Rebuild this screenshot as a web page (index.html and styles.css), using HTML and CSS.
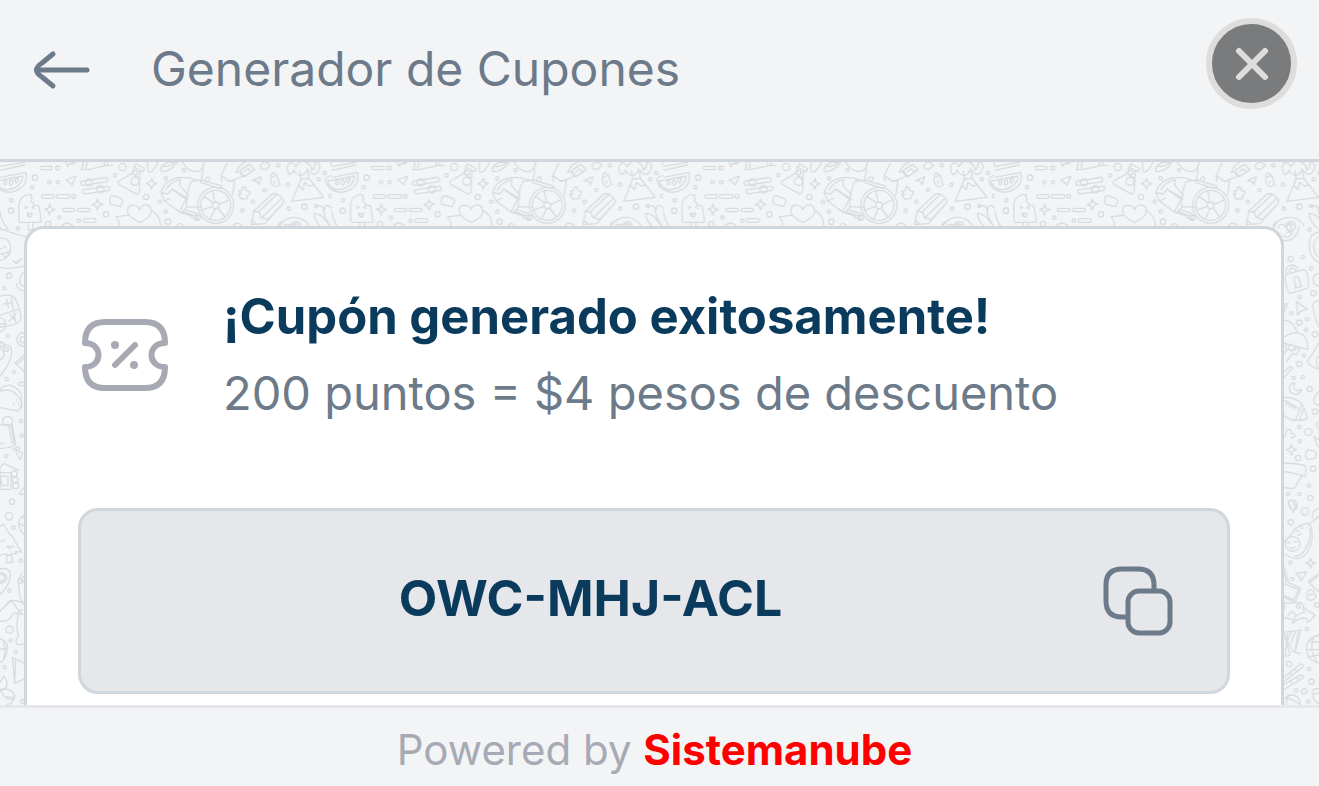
FILE: index.html
```html
<!DOCTYPE html>
<html lang="es">
<head>
<meta charset="utf-8">
<meta name="viewport" content="width=device-width, initial-scale=1">
<title>Generador de Cupones</title>
<link rel="stylesheet" href="styles.css">
</head>
<body>
<header class="topbar">
  <button class="icon-button back" type="button" aria-label="Volver">
    <svg width="60" height="44" viewBox="0 0 60 44" fill="none" stroke="currentColor" stroke-width="5" stroke-linecap="round" stroke-linejoin="round"><path d="M21 6 10 15Q-1 22 10 29L21 38M5 22H55"/></svg>
  </button>
  <h1 class="title">Generador de Cupones</h1>
  <button class="close" type="button" aria-label="Cerrar">
    <svg width="36" height="36" viewBox="0 0 36 36" fill="none" stroke="currentColor" stroke-width="6" stroke-linecap="round"><path d="m5 5 26 26M31 5 5 31"/></svg>
  </button>
</header>
<main class="content">
  <svg class="doodles" aria-hidden="true">
    <defs>
      <pattern id="doodle" width="995" height="1650" patternUnits="userSpaceOnUse" patternTransform="scale(.33333)">
        <g fill="none" stroke="#d9dbde" stroke-width="4" stroke-linecap="round" stroke-linejoin="round">
          <g transform="translate(0 -36)">
            <path d="M0 49 73 37M0 61 73 45M0 82 77 67Q85 102 57 118 28 135 0 119M0 113Q23 125 46 112 70 99 68 78L0 91M12 97q1-9 6-8 4 8-1 15-6 1-5-7ZM30 92q8-6 8 5 0 10-7 8-6-4-1-13ZM46 87q8-5 9 2 0 8-6 10-7-4-3-12Z"/>
            <path d="M57 212 56 168Q58 138 86 133l9 2q-7 8 2 11-8 9 3 12 0 10 11 8l6 3 7 44q-1 4-5 4H62q-5 0-5-5ZM85 220v20h13v-20M75 169l8 3-7 3M103 168l-7 4 7 3M81 190h15q-1 11-8 11-7-2-7-11ZM86 193v6"/>
            <path d="M0 185Q5 218 25 238 16 243 0 237M197 35l6 15 4-8 18-3-15-5M212 100 197 90 228 78 216 105ZM149 162l4 12 12 5-12 4-5 12-4-13-10-4 11-4ZM292 147l4 11 12 5-11 4-5 12-5-11-11-4 12-5ZM455 85l4 12 11 4-11 5-5 12-4-12-11-5 12-5Z"/>
            <path d="M243 59h20l58-13h17M246 59l4-21M258 56l3-18M313 47v-12M323 46v-11"/>
            <rect x="120" y="49" width="37" height="10" rx="5"/><rect x="125" y="134" width="37" height="11" rx="5"/><rect x="169" y="134" width="40" height="11" rx="5"/><rect x="187" y="175" width="38" height="10" rx="5"/><rect x="233" y="175" width="38" height="10" rx="5"/><rect x="250" y="206" width="38" height="11" rx="5"/>
            <g transform="rotate(-9 282 94)"><rect x="242" y="88" width="81" height="13" rx="6"/><circle cx="267" cy="95" r="11"/></g>
            <g transform="rotate(-8 288 120)"><rect x="248" y="114" width="81" height="13" rx="6"/><circle cx="301" cy="120" r="11"/></g>
            <path d="m408 42 22 12q5 2 2 6l-4 5q-4-2-26-14l6-9M404 52l-9 19-38 22q-6 5 0 10l48 27q10 6 13-7l2-62M403 78l13 5"/><circle cx="405" cy="94" r="12"/><circle cx="406" cy="68" r="7"/>
            <path d="m331 140 10-3 20 8q8 2 7 10l-7 15-25-6q-7-1-7-9ZM443 36q-2 30 5 31 13-2 26-31M482 60q0-14 21-23h28q-17 26-43 28-6 0-6-5ZM488 48q16 6 37-11"/>
            <path d="M382 184q2-21 20-18 13 1 16 13 8-16 21-14 15 2 15 19 0 17-35 34-36-18-37-34ZM356 235q4-16 0-22l-8-13 38-4M453 181q28 12 28 48"/>
            <path d="M483 128q9-36 48-44 33-6 62 8M483 128l20 4 14-15 48 30M497 120q16-26 44-31l-2 17 27 30M483 128l10 25 45 33 20-38-40-29M493 153l17-8M538 186l38 12M574 94q-17 37-14 76l44 2M562 170l-14 15 42 14M547 36q16 28 41 29 19 0 25-29M610 57l-6 33-28 4M552 178l38 12 2 18-19-6M604 91q4-3 10 2l49 14q6 5 3 8l-17-2-45-15q-5-4 0-7ZM665 94l-2-17 25 17 16-2-6 43"/>
            <circle cx="647" cy="166" r="54"/><circle cx="647" cy="166" r="45"/><circle cx="647" cy="166" r="10"/><circle cx="592" cy="203" r="8"/><path d="m644 156-6-34M657 163l28-12M654 174l20 27M645 176l-14 30M637 169l-34 12M639 158l-27-18M617 90q0-12 11-8 2 6-3 11M663 77l17-36M688 94l43-16M707 66l14-1 14 15M720 61l28-18 16 16-29 20Q720 81 720 61M732 65l12-9 8 8M781 46l13-12 17 11-14 14-14-3ZM757 92l27-12-7 24-6-10ZM710 67q4-22 28-31"/>
            <path d="m716 124 10-3 2-10 9 1 1 9 12 4-2 9-7 4 2 8-19 1-9-13 8-2ZM812 82l19-6 8 29-14 6q-14-7-13-29ZM814 81q-3-10 5-12 8 0 6 9M824 92v8"/>
            <path d="m754 224 8-41 52-49q10-8 25 3 16 12 10 23l-54 61ZM760 183l19 5 4 15 17 4M775 187l55-53M785 203l58-56M801 211l49-52M755 209l13 13"/>
            <path d="M868 74q-14-23 2-36 15 3 17 12 12-21 30-14 17 6 18 25 13-11 10-26 11 0 14 12 2 19-17 27-14-5-21-17-5 19-21 20-16-6-18-17-4 12-14 14ZM900 63l3 24-27 67 95-12-45-58-2-20M903 87l24-2M903 87l-7 19 13 13 5-22 14 11 15-3"/>
            <path d="M838 229q16-28 46-27 28 1 43 25M949 167q18-2 25 12-2-14 11-12 10 2 11 16l18 54M942 190q14 1 20 7 8 2 10 9l23 27M942 190q4 28 26 45M970 177q4 31 26 58M995 76q-19 5-19 14 5 21 19 28M995 48l-3-12M995 92l-11-1q0 15 11 19M184 229q16-20 36 0M529 230q10-20 22 0M700 226q11-13 26 0M873 226q5-16 22 0"/>
            <g><circle cx="173" cy="54" r="6"/><circle cx="148" cy="97" r="5"/><circle cx="174" cy="97" r="5"/><circle cx="105" cy="83" r="8"/><circle cx="96" cy="112" r="5"/><circle cx="34" cy="151" r="5"/><circle cx="33" cy="182" r="8"/><circle cx="54" cy="235" r="5"/><circle cx="144" cy="222" r="8"/><circle cx="178" cy="203" r="5"/><circle cx="221" cy="139" r="6"/><circle cx="237" cy="212" r="5"/><circle cx="318" cy="193" r="8"/><circle cx="368" cy="51" r="11"/><circle cx="345" cy="76" r="5"/><circle cx="438" cy="141" r="8"/><circle cx="497" cy="85" r="5"/><circle cx="479" cy="155" r="5"/><circle cx="497" cy="185" r="5"/><circle cx="504" cy="215" r="8"/><circle cx="552" cy="60" r="5"/><circle cx="727" cy="182" r="5"/><circle cx="759" cy="155" r="5"/><circle cx="794" cy="120" r="5"/><circle cx="835" cy="46" r="5"/><circle cx="864" cy="104" r="5"/><circle cx="866" cy="176" r="5"/><circle cx="913" cy="170" r="8"/><circle cx="948" cy="168" r="5"/><circle cx="956" cy="88" r="5"/><circle cx="974" cy="69" r="5"/><circle cx="992" cy="138" r="5"/></g>
          </g>
          <g transform="translate(0 174)">
            <path d="M0 24q35 17 77 25M0 55q23-5 31 20 5 31-20 43L0 121M0 86l6-1M11 80l6 3M0 101q15 3 26-7M8 99q1 14 12 11 8-4 3-13M0 142q40 8 75-5M39 122l8 8 12-11M45 126l6 4 14-14M76 156q-23 11-14 38l13 7M49 190q0 18 25 24"/>
            <path d="M0 229q27-8 42 2 13 17 20 53 5 19-15 27-28 11-47 10M35 227q-2 11 12 78M0 286l53-18M10 252l27-4M20 238l5 25M30 283l16 19M48 280l-21 24M0 293q14 2 17 18 1 18-17 25M0 312h16"/>
            <path d="M0 365q13 0 10 11 28-6 24 28Q32 430 0 468M0 384q13 6 12 20-2 12-12 16M77 340q-24-5-27 18 2 22 27 21M76 350q-16-2-17 9 2 11 17 10M45 429l32-28M45 429l30 27M51 432l24-20"/>
            <path d="M0 516q1-19 24-20 18-3 40 25v22q-2 30-11 30L0 563M0 514q36-14 58 20 11 12 6 30M54 492q3-8 21-4v8q-18 3-21-4ZM49 539v4M41 548v4M55 549v4"/>
            <path d="M0 615q17-3 37-1 6 32 10 61-16 9-47 10M25 615l12 55M32 613l12 59M8 602q2-13 16-12 14 2 14 14-3 14-18 13-14-2-12-15ZM0 673q10-11 12 1M41 688q8-9 14-7l4 2-3 12 12 3-8 21-5-8-7-14 4-9-13 2ZM0 742l12-12 43 21M0 742v67M0 758h33v50H0M1 769h23v28H5ZM57 822q10-16 17-20v22Z"/>
            <circle cx="19" cy="389" r="6"/><circle cx="6" cy="374" r="7"/><circle cx="43" cy="762" r="9"/><circle cx="45" cy="780" r="9"/><circle cx="47" cy="797" r="9"/><circle cx="27" cy="167" r="8"/><circle cx="13" cy="205" r="5"/><circle cx="24" cy="348" r="5"/><circle cx="42" cy="456" r="5"/><circle cx="20" cy="477" r="5"/><circle cx="63" cy="603" r="5"/><circle cx="65" cy="647" r="5"/><circle cx="19" cy="708" r="5"/><circle cx="36" cy="845" r="8"/>
          </g>
          <g transform="translate(0 984)">
            <path d="M0 110 11 102 28 132 37 139 54 170 65 186 46 185 49 192 35 191 30 197 13 192 0 197M3 150q5 9 10 0M21 172l3-5 4 8 8-8 4 5M21 197l-2 22 20-3-5-20M76 72q-18 9-20 30 3 24 20 33M65 82l10 5M57 101l18 8"/>
            <path d="M0 237q31-7 31 20-3 31-31 57M0 249q18-1 20 15-1 14-20 15M65 250q-10 11-10 27 4 55 12 58l8 1M56 278h19M0 364l30-32q29-3 45 15M0 362l34-30q19 27 35 42l-27-5M0 393q27 7 39-23M55 371q-9 38 1 66-13 15-6 24 10 8 25-3M52 366l16-8M0 446q30 10 20 43-7 23-20 28M0 477h22M9 450q10 20 2 58M38 503l38 18M38 503l6 78 31-16M47 512l-3 68M0 577l11-18 10 16-1 14q-9 14-20 12M0 598q34-5 44 18-1 24-22 28M0 598l13 22 31 3M14 620q10 12 28 6"/>
            <circle cx="4" cy="263" r="10"/><circle cx="60" cy="273" r="6"/><circle cx="70" cy="267" r="6"/><circle cx="27" cy="79" r="11"/><circle cx="40" cy="113" r="5"/><circle cx="62" cy="212" r="5"/><circle cx="28" cy="302" r="5"/><circle cx="29" cy="419" r="11"/><circle cx="32" cy="451" r="5"/><circle cx="47" cy="486" r="5"/><circle cx="14" cy="532" r="5"/><circle cx="67" cy="634" r="6"/>
          </g>
          <g transform="translate(795 174)">
            <path d="M49 5q-9 6-9 16 3 42 38 41 31-2 39-40M56 24q0-12 10-11 9 1 10 8 8-12 16-5 6 15-11 23M70 47q15 11 27-7M82 14q2-9 12-9 11 0 12 12 0 12-15 20-14-7-9-23ZM177 36q-27 3-29 34-2 44 29 58M177 51q-15 6-16 28 1 24 16 33"/>
            <path d="M79 162q-5-25 17-27 17 1 18 16M88 160q-1-15 10-16 7 1 8 10M79 163l53-14q8-1 12 24 4 27-3 32l-49 15q-7 1-14-27-6-25 1-30ZM108 193l-5-9q-5-13 7-15 12 6 8 15l7 14-21 6 2-10M177 161q-18 2-18 18 2 17 18 19M113 285l-4-40 34 24-21 4ZM65 287l8-34 10-3-10 25ZM177 242q-19 3-19 17 8 41 19 62"/>
            <path d="M65 301q31-5 46 36M70 353q18-13 40-15 35 4 33 50L70 369M76 369l4 21-14 20M80 423l17-22 14 3 8-18M92 372q-15 16 4 21M109 378l-12 13 18-7M67 461l24-22 7 5-28 30ZM177 366q-12 27-35 57 12 23 35 23M177 409q-11 5-8 18 3 13 8 17"/>
            <path d="M104 488q-17 4-16 19 4 17 24 16 11-5 13-15-17 9-24-4 0-9 3-16ZM64 534q36-6 58 14 17 20 19 49-34 10-57-2-19-10-20-29M125 554l-17 43M132 563l-14 38M74 541l40 24M80 545l-2 10M88 549l-2 10M96 553l-2 10M105 558l-3 10M177 514q-16 16-16 32 5 9 16 9"/>
            <path d="M66 654l10-6 3-17q7-6 14 1-2 9 3 9 9-3 8 6-1 7-11 6M94 674l4 11 11 4-10 5-4 11-5-11-11-5 12-5ZM138 697l7-7 19 4 5 4-4 17-23 4-6-10ZM177 605q-13 3-3 20M163 650q6 27 14 31M164 650l13 10M65 730q38-2 71 7 5 19-1 32l-9-3-23 39q-28 0-38-6M66 753q32 5 62 13M71 731l-5 18M87 843l6-4 7 5 3 13 9-3-2 12-11 7q-16-12-12-30Z"/>
            <circle cx="149" cy="29" r="5"/><circle cx="92" cy="117" r="8"/><circle cx="129" cy="111" r="5"/><circle cx="153" cy="146" r="5"/><circle cx="160" cy="220" r="8"/><circle cx="118" cy="232" r="5"/><circle cx="94" cy="280" r="5"/><circle cx="118" cy="308" r="8"/><circle cx="141" cy="298" r="5"/><circle cx="138" cy="329" r="5"/><circle cx="165" cy="343" r="8"/><circle cx="132" cy="406" r="5"/><circle cx="118" cy="432" r="8"/><circle cx="101" cy="474" r="5"/><circle cx="129" cy="471" r="5"/><circle cx="149" cy="507" r="8"/><circle cx="165" cy="575" r="8"/><circle cx="118" cy="621" r="5"/><circle cx="145" cy="636" r="11"/><circle cx="119" cy="664" r="5"/><circle cx="114" cy="714" r="8"/><circle cx="159" cy="746" r="8"/><circle cx="147" cy="797" r="5"/><circle cx="84" cy="822" r="5"/><circle cx="119" cy="822" r="5"/><circle cx="151" cy="834" r="8"/>
          </g>
          <g transform="translate(255 1014)">
            <path d="M624 3q6 19 17 34l4-17 7-3-8-17M716 48l-13 12M717 26q-24 4-19 28M685 75l9-7 21-17M693 80q-5-14-18-8-29 7-41 31l-22 23M693 80q10 36-8 71-20 43-73 11M690 84q5 31-13 62-14 25-33 23M650 92q4 3 8-1M664 84l6 1M653 104q6 3 9-4"/>
            <circle cx="638" cy="132" r="22"/><path d="M625 130l5-5M643 124l6 2M629 142q9 8 18-2M692 174l4 12 11 3-11 4-4 12-5-12-10-4 11-4ZM647 220l32-4-15 27-5-13ZM612 200l13 47 37 18-16 41-34-13M612 251l44 18-14 30-30-11M620 248l-8-31M717 222q-27 15-32 24l32 30M692 246l20-17M679 285q4-17 14-16 12 2 9 12 12 4 3 13-8 11-23 4-6-7 4-9 5-11 12-5M612 309l53-1 8 17M614 315l-2 16M623 349l12-16 14 14M612 353l29 7M637 371q7-31 36-34l-4-15 37 24-23 22-3-13q-20-5-43 16Z"/>
            <path d="M612 397l51-7-18 66 16 5M612 400l19 66-17 3M622 401l-6 66M635 394l-13 29 18 33M645 398l-13 30M655 396l-11 61M717 405q-37 9-38 43 2 34 38 41M680 449h37M688 424l29 2M701 410q-16 39 11 78M683 471l34-6M612 532l50-41q8 2 8 9l-58 44M612 553l48-28q9 0 10 9l-58 34M643 508l8 6M629 519l8 7M649 531l7 8M631 542l6 8"/>
            <path d="M612 597q21-20 39-7 10 10 10 24M615 594q21 1 46 20M625 584l-8 30M717 567q-23-4-20 16 4 20 20 28M697 580q10 5 20-2"/>
            <circle cx="675" cy="34" r="11"/><circle cx="632" cy="67" r="8"/><circle cx="631" cy="188" r="5"/><circle cx="637" cy="237" r="5"/><circle cx="655" cy="319" r="6"/><circle cx="711" cy="315" r="7"/><circle cx="681" cy="387" r="5"/><circle cx="627" cy="492" r="8"/><circle cx="688" cy="507" r="5"/><circle cx="694" cy="545" r="8"/><circle cx="648" cy="571" r="5"/><circle cx="672" cy="574" r="8"/><circle cx="685" cy="605" r="5"/>
          </g>
        </g>
      </pattern>
    </defs>
    <rect width="100%" height="100%" fill="url(#doodle)"/>
  </svg>
  <section class="card">
    <div class="summary">
      <svg class="ticket" width="88" height="76" viewBox="0 0 88 76" fill="none" stroke="currentColor" stroke-width="6" stroke-linecap="round" stroke-linejoin="round"><path d="M4 26Q4 5 24 5H64Q84 5 84 26C66 26 66 50 84 50Q84 71 64 71H24Q4 71 4 50C22 50 22 26 4 26Z"/><path d="M34 48 54 28"/><g fill="currentColor" stroke="none"><circle cx="34" cy="28" r="4"/><circle cx="53" cy="48" r="4"/></g></svg>
      <div class="message">
        <h2 class="headline">¡Cupón generado exitosamente!</h2>
        <p class="detail">200 puntos = $4 pesos de descuento</p>
      </div>
    </div>
    <div class="coupon">
      <strong class="code">OWC-MHJ-ACL</strong>
      <button class="icon-button" type="button" aria-label="Copiar cupón">
        <svg width="72" height="72" viewBox="0 0 72 72" fill="none" stroke="currentColor" stroke-width="5" stroke-linecap="butt"><path d="M26 52H21Q5 52 5 36V20Q5 4 21 4H37Q53 4 53 20V26"/><rect x="27" y="26" width="42" height="42" rx="11"/></svg>
      </button>
    </div>
  </section>
</main>
<footer class="footer">Powered by <a class="brand" href="#">Sistemanube</a></footer>
</body>
</html>
```
FILE: styles.css
```css
* { box-sizing: border-box; }
body {
  margin: 0;
  height: 100vh;
  display: flex;
  flex-direction: column;
  background: #f3f4f6;
  color: #6c7a89;
  font-family: Inter, "Liberation Sans", sans-serif;
  font-size: 48px;
  line-height: 60px;
}
h1, h2, p { margin: 0; font-size: inherit; }
button {
  padding: 0;
  border: 0;
  background: none;
  color: inherit;
  cursor: pointer;
}
svg { display: block; }
.topbar {
  display: flex;
  align-items: center;
  padding: 18px 22px 50px 32px;
  border-bottom: 3px solid #d0d6dd;
}
.icon-button { flex: none; }
.back { padding-top: 12px; }
.title {
  flex: 1;
  padding: 10px 0 0 59px;
  font-weight: 400;
}
.close {
  flex: none;
  display: grid;
  place-items: center;
  width: 91px;
  height: 91px;
  border: 6px solid #dddddd;
  border-radius: 50%;
  background: #7a7b7c;
  color: #dddddd;
}
.content {
  position: relative;
  flex: 1;
  min-height: 0;
  overflow: hidden;
  padding: 64px 35px 0 24px;
}
.doodles {
  position: absolute;
  inset: 0;
  width: 100%;
  height: 100%;
}
.card {
  position: relative;
  padding: 58px 51px 60px;
  border: 3px solid #d0d6dd;
  border-radius: 20px;
  background: #ffffff;
}
.summary {
  display: flex;
  align-items: center;
  gap: 54px;
  padding-left: 3px;
  margin-bottom: 85px;
}
.ticket {
  flex: none;
  color: #a7aab4;
}
.message {
  display: grid;
  gap: 16px;
}
.headline {
  color: #0a3a5c;
  font-size: 49px;
  font-weight: 700;
}
.detail { font-size: 47px; }
.coupon {
  display: flex;
  align-items: center;
  padding: 54px;
  border: 3px solid #d0d6dd;
  border-radius: 20px;
  background: #e5e7eb;
}
.code {
  flex: 1;
  padding: 0 55px 6px 0;
  color: #0a3a5c;
  font-size: 50px;
  text-align: center;
}
.footer {
  padding: 12px 10px 6px 0;
  border-top: 3px solid #e5e7eb;
  color: #a7aab4;
  font-size: 42px;
  text-align: center;
}
.brand {
  color: #ff0000;
  font-weight: 700;
  text-decoration: none;
}
```
